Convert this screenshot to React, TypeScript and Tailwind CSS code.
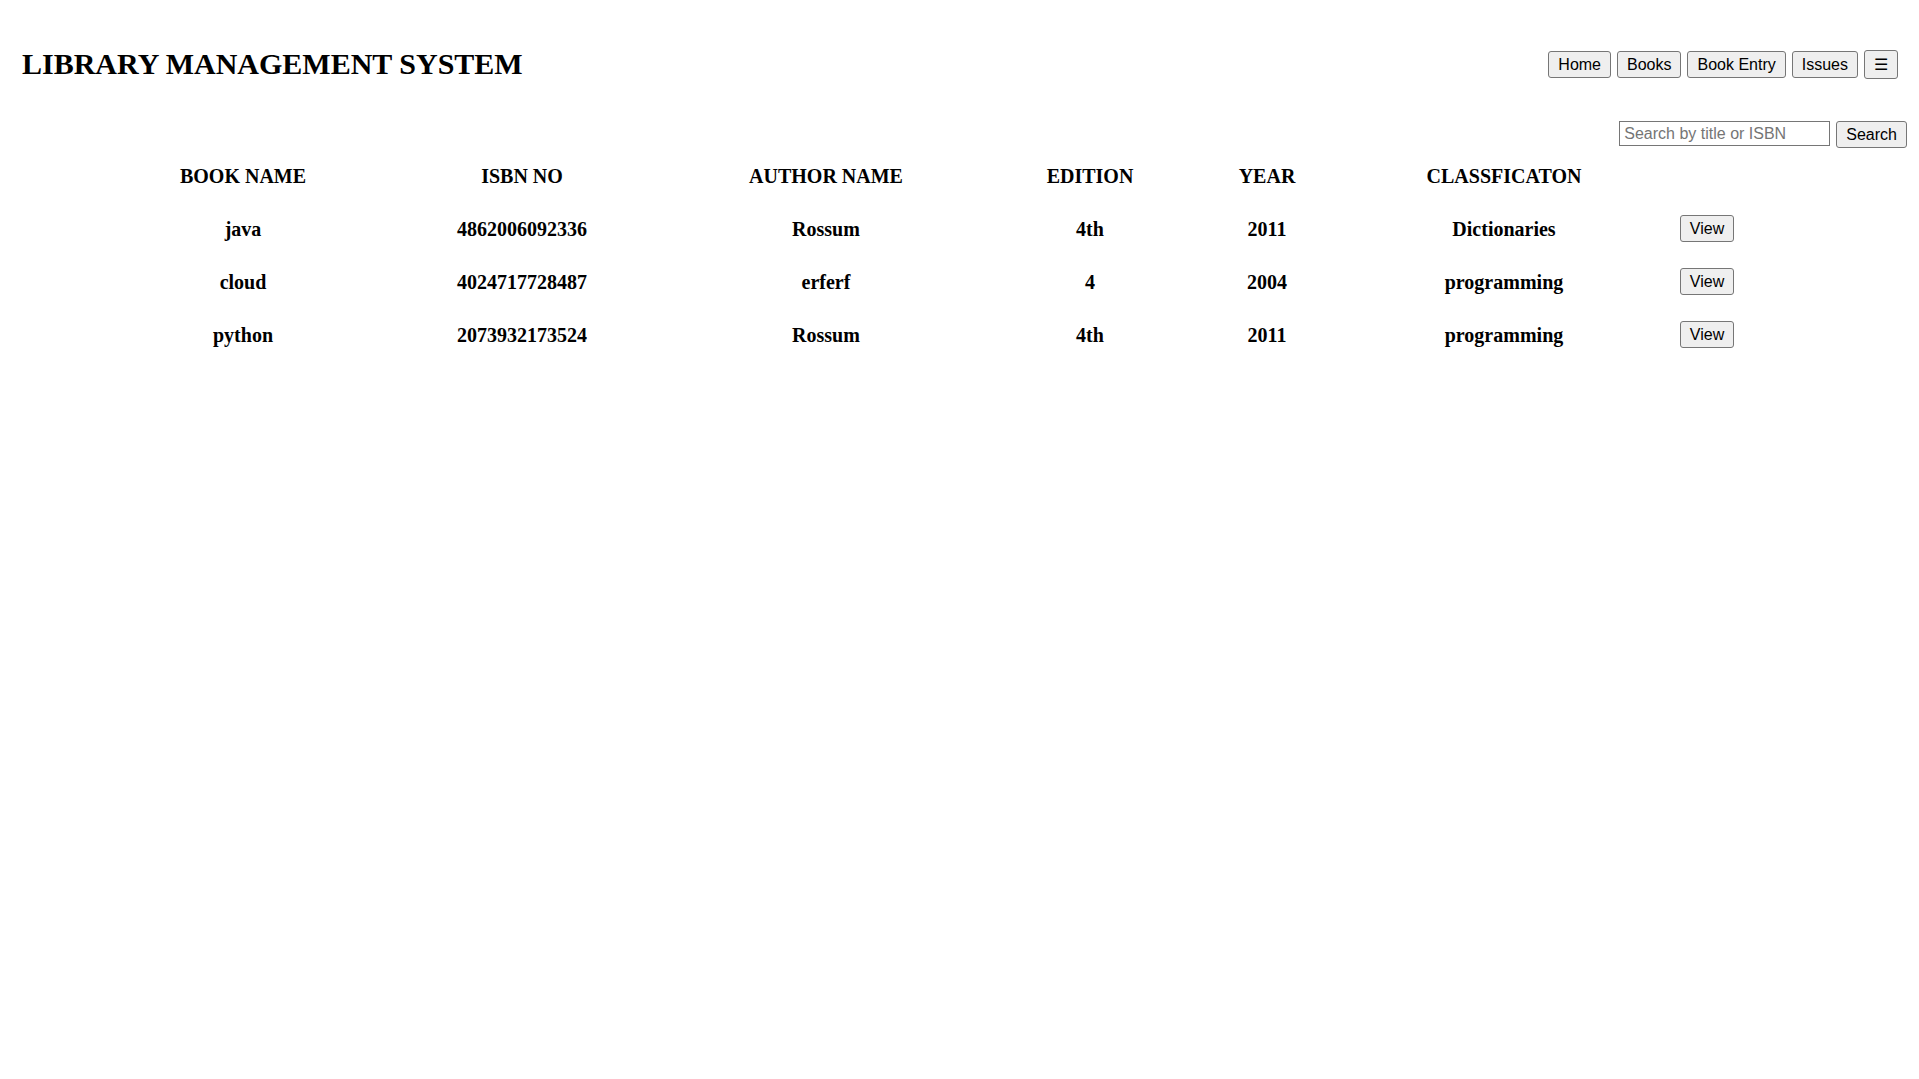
import React from 'react';

interface Book {
  name: string;
  isbn: string;
  author: string;
  edition: string;
  year: string;
  classification: string;
}

const books: Book[] = [
  { name: 'java', isbn: '4862006092336', author: 'Rossum', edition: '4th', year: '2011', classification: 'Dictionaries' },
  { name: 'cloud', isbn: '4024717728487', author: 'erferf', edition: '4', year: '2004', classification: 'programming' },
  { name: 'python', isbn: '2073932173524', author: 'Rossum', edition: '4th', year: '2011', classification: 'programming' },
];

const headers = ['BOOK NAME', 'ISBN NO', 'AUTHOR NAME', 'EDITION', 'YEAR', 'CLASSFICATON', ''];

// plain grey browser-style button
const btn =
  "font-['Liberation_Sans',Arial,sans-serif] text-[16px] leading-[19px] text-black bg-[#efefef] border border-[#767676] rounded-[3px] px-[9px] py-[3px] hover:bg-[#e5e5e5]";

const rowGrid =
  'grid grid-cols-[284px_274px_334px_194px_160px_314px_92px] ml-[101px] h-[53px] items-center text-center';

export default function App() {
  return (
    <div className="min-h-screen bg-white text-black font-['Liberation_Serif','Times_New_Roman',serif]">
      {/* Header: title + nav */}
      <header className="flex items-center justify-between pl-[22px] pr-[21px] pt-[47px]">
        <h1 className="text-[30px] leading-[34px] font-bold">LIBRARY MANAGEMENT SYSTEM</h1>
        <nav className="flex items-center gap-[6px]">
          <button className={btn}>Home</button>
          <button className={btn}>Books</button>
          <button className={btn}>Book Entry</button>
          <button className={btn}>Issues</button>
          <button className={`${btn} leading-[21px] px-[8px]`}>☰</button>
        </nav>
      </header>

      {/* Search */}
      <div className="flex justify-end items-start gap-[6px] pr-[12px] mt-[40px]">
        <input
          type="text"
          placeholder="Search by title or ISBN"
          className="w-[211px] h-[25px] border border-[#767676] px-[4px] font-['Liberation_Sans',Arial,sans-serif] text-[16px] placeholder:text-[#757575] outline-none"
        />
        <button className={btn}>Search</button>
      </div>

      {/* Book table */}
      <div className="mt-[1px] text-[20px] font-bold">
        <div className={rowGrid}>
          {headers.map((h, i) => (
            <div key={i}>{h}</div>
          ))}
        </div>
        {books.map((b) => (
          <div key={b.isbn} className={rowGrid}>
            <div>{b.name}</div>
            <div>{b.isbn}</div>
            <div>{b.author}</div>
            <div>{b.edition}</div>
            <div>{b.year}</div>
            <div>{b.classification}</div>
            <div className="flex items-center justify-center -mt-[1px]">
              <button className={`${btn} font-normal`}>View</button>
            </div>
          </div>
        ))}
      </div>
    </div>
  );
}
